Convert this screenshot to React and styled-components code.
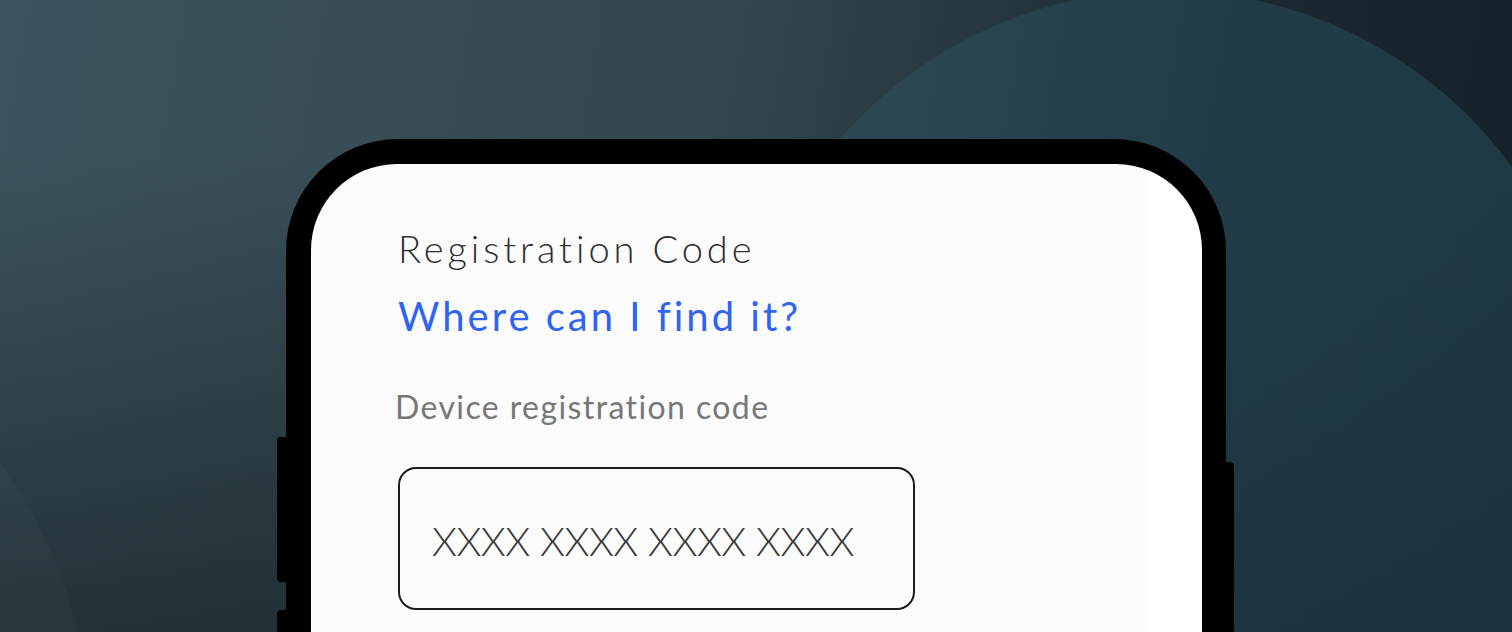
import styled, { createGlobalStyle } from "styled-components";

const Global = createGlobalStyle`
  html, body {
    margin: 0;
    padding: 0;
    overflow: hidden;
  }
  body {
    font-family: Lato, "Liberation Sans", sans-serif;
  }
`;

const Stage = styled.div`
  width: 1512px;
  height: 632px;
  overflow: hidden;
  padding: 139px 0 0 286px;
  box-sizing: border-box;
  background:
    radial-gradient(circle at 1165px 420px, rgba(44, 84, 98, 0.45) 0 429px, transparent 430px),
    radial-gradient(circle at -420px 760px, rgba(255, 255, 255, 0.02) 0 514px, transparent 515px),
    linear-gradient(to bottom, transparent 25%, rgba(8, 12, 15, 0.45) 100%),
    linear-gradient(100deg, #3c545e 0%, #34464e 45%, #1a2a32 75%, #13202a 100%);
`;

const Phone = styled.div`
  position: relative;
  width: 940px;
  height: 520px;
  box-sizing: border-box;
  padding: 25px 24px 0 25px;
  background: #000;
  border-radius: 112px 112px 0 0;

  &::before {
    content: "";
    position: absolute;
    left: -9px;
    top: 298px;
    width: 12px;
    height: 145px;
    background: #000;
    border-radius: 4px;
    box-shadow: 0 173px 0 #000;
  }

  &::after {
    content: "";
    position: absolute;
    right: -8px;
    top: 323px;
    width: 12px;
    height: 200px;
    background: #000;
    border-radius: 4px;
  }
`;

const Screen = styled.div`
  height: 100%;
  border-radius: 86px 86px 0 0;
  background: linear-gradient(to right, #fbfbfb 0 837px, #ffffff 837px);
  padding: 61px 0 0 87px;
  box-sizing: border-box;
  display: flex;
  flex-direction: column;
  align-items: flex-start;
`;

const Title = styled.h1`
  margin: 0;
  font-size: 38px;
  font-weight: 300;
  color: #2e2e2e;
  line-height: 46px;
  letter-spacing: 3.9px;
`;

const HelpLink = styled.a`
  margin-top: 20px;
  font-size: 40px;
  font-weight: 400;
  color: #2f63f0;
  line-height: 50px;
  letter-spacing: 3px;
  text-decoration: none;
`;

const FieldLabel = styled.label`
  margin-top: 46px;
  margin-left: -3px;
  font-size: 32px;
  font-weight: 400;
  color: #777777;
  line-height: 40px;
  letter-spacing: 1.4px;
`;

const CodeBox = styled.div`
  margin-top: 40px;
  width: 517px;
  height: 143px;
  box-sizing: border-box;
  border: 2px solid #1c1c1c;
  border-radius: 18px;
  display: flex;
  align-items: center;
  padding: 4px 0 0 32px;
  background: #fcfcfc;
`;

const Placeholder = styled.span`
  font-size: 40px;
  font-weight: 300;
  color: #3a3a3a;
  letter-spacing: -0.5px;
`;

export default function App() {
  return (
    <>
      <Global />
      <Stage>
        <Phone>
          <Screen>
            <Title>Registration Code</Title>
            <HelpLink href="#">Where can I find it?</HelpLink>
            <FieldLabel>Device registration code</FieldLabel>
            <CodeBox>
              <Placeholder>XXXX XXXX XXXX XXXX</Placeholder>
            </CodeBox>
          </Screen>
        </Phone>
      </Stage>
    </>
  );
}
